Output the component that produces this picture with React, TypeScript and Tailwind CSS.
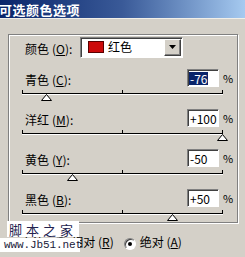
import React from "react";

const FONT = '"Noto Sans CJK SC", "Liberation Sans", sans-serif';

interface ChannelRow {
  label: string;
  key: string;
  value: number;
  selected?: boolean;
}

const rows: ChannelRow[] = [
  { label: "青色", key: "C", value: -76, selected: true },
  { label: "洋红", key: "M", value: 100 },
  { label: "黄色", key: "Y", value: -50 },
  { label: "黑色", key: "B", value: 50 },
];

function fmt(v: number) {
  return v > 0 ? `+${v}` : `${v}`;
}

function Label({ text, k }: { text: string; k: string }) {
  return (
    <span className="text-[12px] leading-none text-black whitespace-nowrap">
      {text}
      <span className="ml-[3px]">(</span>
      <span className="underline">{k}</span>):
    </span>
  );
}

function Slider({ value }: { value: number }) {
  // track spans 200px, -100..100
  const x = ((value + 100) / 200) * 200;
  return (
    <div className="relative ml-[13px] w-[201px] h-[10px]">
      <div className="absolute left-0 top-0 w-[201px] h-[1px] bg-black" />
      <div className="absolute left-0 top-[1px] w-[201px] h-[1px] bg-white" />
      <div className="absolute left-0 top-[-3px] w-[1px] h-[3px] bg-black" />
      <div className="absolute left-[100px] top-[-3px] w-[1px] h-[3px] bg-black" />
      <div className="absolute left-[200px] top-[-3px] w-[1px] h-[3px] bg-black" />
      <svg
        className="absolute top-[1px]"
        style={{ left: x - 5 }}
        width="11"
        height="7"
        viewBox="0 0 11 7"
      >
        <polygon points="5.5,0.5 10.5,6.5 0.5,6.5" fill="#fff" stroke="#000" strokeWidth="1" />
      </svg>
    </div>
  );
}

function Radio({ checked }: { checked?: boolean }) {
  return (
    <span className="relative inline-flex w-[12px] h-[12px] rounded-full bg-white border border-[#808080] border-b-[#fff] border-r-[#fff] shadow-[inset_1px_1px_0_#404040] items-center justify-center">
      {checked && <span className="w-[4px] h-[4px] rounded-full bg-black" />}
    </span>
  );
}

export default function App() {
  return (
    <div
      className="relative w-[245px] h-[257px] bg-[#d4d0c8] overflow-hidden"
      style={{ fontFamily: FONT }}
    >
      {/* title bar */}
      <div className="h-[18px] bg-gradient-to-r from-[#0a246a] via-[#3a5a98] to-[#a6caf0] flex items-center">
        <span className="-ml-[1px] text-[13px] font-bold text-white leading-none tracking-[0.5px]">
          可选颜色选项
        </span>
      </div>
      <div className="h-[1px] bg-[#f0eee8]" />

      {/* group box */}
      <div className="mt-[15px] ml-[8px] w-[230px] h-[189px] border border-[#808080] shadow-[inset_1px_1px_0_#fff,1px_1px_0_#fff]">
        <div className="-mt-[7px] ml-[13px] inline-flex items-center h-[21px] bg-[#d4d0c8] pl-[3px]">
          <span className="w-[55px]">
            <Label text="颜色" k="O" />
          </span>
          <div className="flex items-center w-[103px] h-[21px] bg-white border border-[#808080] border-b-white border-r-white shadow-[inset_1px_1px_0_#404040]">
            <span className="ml-[7px] w-[16px] h-[12px] bg-[#cc0a0a] border border-[#5a0000]" />
            <span className="ml-[4px] text-[12px] leading-none text-black">红色</span>
            <span className="ml-auto mr-[1px] w-[17px] h-[17px] bg-[#d4d0c8] border border-white border-b-[#404040] border-r-[#404040] shadow-[inset_-1px_-1px_0_#808080] flex items-center justify-center">
              <svg width="7" height="4" viewBox="0 0 7 4">
                <polygon points="0,0 7,0 3.5,4" fill="#000" />
              </svg>
            </span>
          </div>
        </div>

        <div className="mt-[10px] flex flex-col">
          {rows.map((r) => (
            <div key={r.key} className="h-[40px]">
              <div className="flex items-center h-[18px] pl-[16px]">
                <span className="w-[162px]">
                  <Label text={r.label} k={r.key} />
                </span>
                <span className="flex items-center w-[32px] h-[18px] bg-white border border-[#808080] border-b-white border-r-white shadow-[inset_1px_1px_0_#404040] pl-[1px]">
                  <span
                    className={`text-[12px] leading-[13px] px-[1px] ${
                      r.selected ? "bg-[#0a246a] text-white" : "text-black"
                    }`}
                  >
                    {fmt(r.value)}
                  </span>
                </span>
                <span className="ml-[4px] text-[11px] leading-none text-black">%</span>
              </div>
              <div className="mt-[6px]">
                <Slider value={r.value} />
              </div>
            </div>
          ))}
        </div>
      </div>

      {/* method row */}
      <div className="flex items-center h-[20px] mt-[9px] pl-[20px] text-[12px] leading-none text-black">
        <span>方法:</span>
        <span className="ml-[8px]">
          <Radio />
        </span>
        <span className="ml-[4px]">
          相对 (<span className="underline">R</span>)
        </span>
        <span className="ml-[10px]">
          <Radio checked />
        </span>
        <span className="ml-[4px]">
          绝对 (<span className="underline">A</span>)
        </span>
      </div>

      {/* watermark */}
      <div className="absolute left-[7px] top-[221px] w-[72px] h-[16px] bg-white flex items-center pl-[2px] whitespace-nowrap text-[13px] leading-none text-[#23234f]">
        <span>脚</span>
        <span className="ml-[4px]">本</span>
        <span className="ml-[4px]">之</span>
        <span className="ml-[4px]">家</span>
      </div>
      <div className="absolute left-0 top-[238px] w-[80px] h-[14px] bg-white flex items-center pl-[4px] whitespace-nowrap text-[11px] leading-none text-[#1a1a3a] tracking-[-0.1px]" style={{ fontFamily: '"Liberation Mono", monospace' }}>
        www.Jb51.net
      </div>
    </div>
  );
}
